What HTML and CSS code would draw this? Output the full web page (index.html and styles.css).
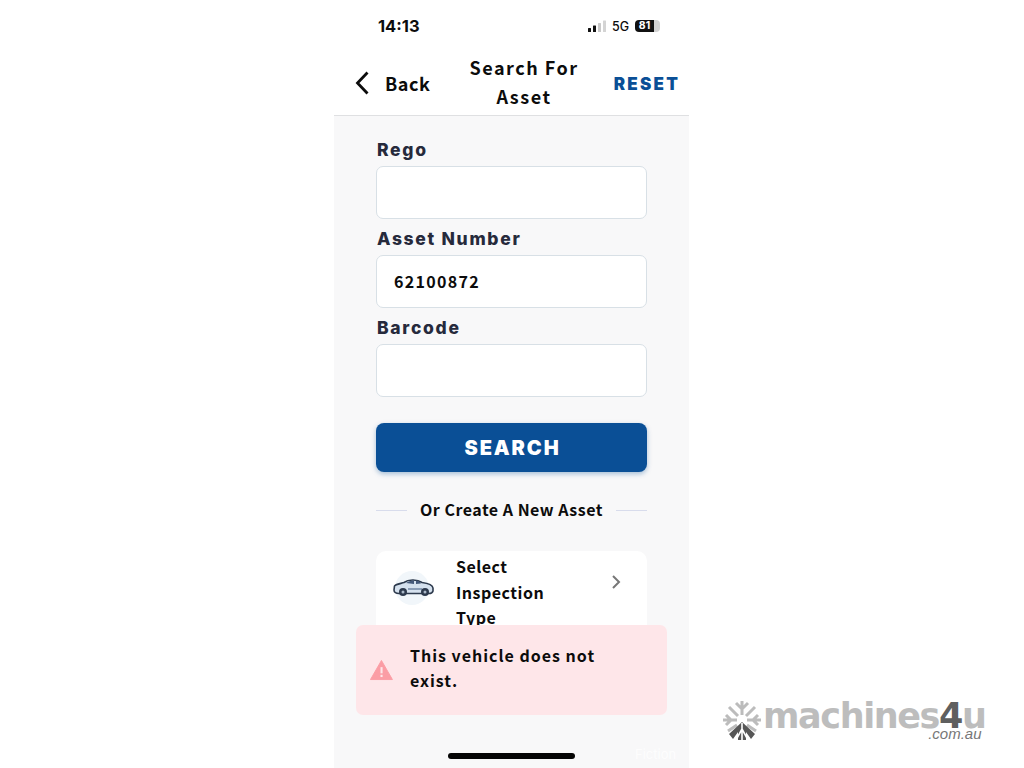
FILE: index.html
```html
<!DOCTYPE html>
<html>
<head>
<meta charset="utf-8">
<title>Search For Asset</title>
<link rel="stylesheet" href="styles.css">
</head>

<body>
	<div class="phone">
		<div class="status-bar">
			<span class="time">14:13</span>
			<div class="status-icons">
				<svg class="signal" width="18" height="12" viewBox="0 0 18 12">
					<rect x="0" y="8" width="3" height="4" rx="0.5" fill="#111"/>
					<rect x="5" y="5.5" width="3" height="6.5" rx="0.5" fill="#111"/>
					<rect x="10" y="3" width="3" height="9" rx="0.5" fill="#c9c9c9"/>
					<rect x="15" y="0.5" width="3" height="11.5" rx="0.5" fill="#d4d4d4"/>
				</svg>
				<span class="network">5G</span>
				<div class="battery"><span class="battery-level">81</span><span class="battery-rest"></span></div>
			</div>
		</div>

		<div class="nav-bar">
			<div class="nav-back">
				<svg width="14" height="24" viewBox="0 0 14 24">
					<path d="M12.500 1.500 L2.500 12 L12.500 22.500" fill="none" stroke="#0c0c0c" stroke-width="2.800"/>
				</svg>
				<span>Back</span>
			</div>
			<div class="nav-title">Search For<br>Asset</div>
			<div class="nav-reset">RESET</div>
		</div>

		<div class="content">
			<label class="field-label">Rego</label>
			<div class="field"></div>
			<label class="field-label">Asset Number</label>
			<div class="field">62100872</div>
			<label class="field-label">Barcode</label>
			<div class="field"></div>

			<button class="search-btn">SEARCH</button>

			<div class="divider">
				<span class="divider-line"></span>
				<span class="divider-text">Or Create A New Asset</span>
				<span class="divider-line"></span>
			</div>

			<div class="card">
				<div class="car-icon">
					<svg width="42" height="40" viewBox="0 0 42 40">
						<circle cx="19" cy="20" r="17" fill="#f1f6fa"/>
						<path d="M1.500 18 C2 16.500 8 15.500 11 14.500 C15 11.500 24 11 29 14.500 C33 15 39.500 16.500 40 20 L40 23 C39.500 25 38 25.500 36 25.500 L6 25.500 C3 25.500 1 24.500 1 22 Z" fill="#d5e1ee" stroke="#2d3a4d" stroke-width="1.600"/>
						<path d="M13 15 C16 13 19 12.500 21 12.500 L21 16 Z M23 12.500 C25 12.500 27 13.500 28 15.500 L23 16 Z" fill="#44597a"/>
						<path d="M15 21 H29" stroke="#6c81a0" stroke-width="1.400"/>
						<circle cx="10" cy="24" r="4" fill="#2d3a4d"/>
						<circle cx="32" cy="24" r="4" fill="#2d3a4d"/>
						<circle cx="10" cy="24" r="1.500" fill="#aab8c8"/>
						<circle cx="32" cy="24" r="1.500" fill="#aab8c8"/>
					</svg>
				</div>
				<div class="card-text">Select Inspection Type</div>
				<svg class="card-arrow" width="10" height="16" viewBox="0 0 10 16">
					<path d="M2 2 L8 8 L2 14" fill="none" stroke="#777" stroke-width="2"/>
				</svg>
			</div>
		</div>

		<div class="toast">
			<svg class="toast-icon" width="24" height="22" viewBox="0 0 24 22">
				<path d="M12 1 L23.500 21 L0.500 21 Z" fill="#fb9da5" stroke="#fb9da5" stroke-linejoin="round"/>
				<rect x="11" y="8" width="2.200" height="6.500" fill="#fee6e9"/>
				<rect x="11" y="16" width="2.200" height="2.400" fill="#fee6e9"/>
			</svg>
			<div class="toast-text">This vehicle does not exist.</div>
		</div>

		<div class="home-bar"></div>
		<div class="faint-mark">Fiction</div>
	</div>

	<div class="logo">
		<svg width="38" height="40" viewBox="-19 -20 38 40">
			<g stroke="#bcbcbc" stroke-width="3" fill="none">
				<path d="M0 -5 V-19 M-6 -17 L0 -11 L6 -17"/>
				<path d="M-5 0 H-19 M5 0 H19 M-16 -5 L-11 0 L-16 5 M16 -5 L11 0 L16 5"/>
				<path d="M-4 -4 L-13 -13 M4 -4 L13 -13"/>
				<path d="M-5 5 L-14 11 M5 5 L14 11"/>
			</g>
			<path d="M0 2 L-13 14 L-9 19 L-4 12 L-4 20 L4 20 L4 12 L9 19 L13 14 Z" fill="#565656"/>
			<path d="M0 3 V20 M-6 20 L0 9 L6 20" stroke="#fff" stroke-width="1.600" fill="none"/>
		</svg>
		<div class="logo-words">
			<div class="logo-name">machines<span class="logo-four">4</span>u</div>
			<div class="logo-domain">.com.au</div>
		</div>
	</div>
</body>
</html>
```

FILE: styles.css
```css
body {
	margin: 0;
	height: 768px;
	padding-left: 334px;
	background: #fff;
	overflow: hidden;
	font-family: "Noto Sans CJK JP", "Noto Sans", sans-serif;
	color: #0c0c0c;
}

.phone {
	position: relative;
	width: 355px;
	height: 768px;
	display: flex;
	flex-direction: column;
	overflow: hidden;
}

.status-bar {
	height: 52px;
	box-sizing: border-box;
	padding: 0 29px 0 44px;
	display: flex;
	justify-content: space-between;
	align-items: center;
}

.time {
	font-family: Inter, sans-serif;
	font-size: 16.500px;
	font-weight: 700;
}

.status-icons {
	display: flex;
	align-items: center;
	gap: 6px;
}

.network {
	font-family: Inter, sans-serif;
	font-size: 12.500px;
	font-weight: 500;
}

.battery {
	display: flex;
	align-items: center;
	height: 12px;
}

.battery-level {
	width: 19px;
	height: 12px;
	background: #111;
	border-radius: 4px 0 0 4px;
	color: #fff;
	font-family: Inter, sans-serif;
	font-size: 10.500px;
	font-weight: 700;
	line-height: 12px;
	text-align: center;
}

.battery-rest {
	width: 6px;
	height: 12px;
	background: #d2d2d2;
	border-radius: 0 4px 4px 0;
}

.nav-bar {
	height: 64px;
	box-sizing: border-box;
	border-bottom: 1px solid #dfe0e2;
	padding: 0 9px 0 21px;
	display: flex;
	align-items: center;
}

.nav-back {
	display: flex;
	align-items: center;
	gap: 16px;
	width: 104px;
	padding-bottom: 2px;
	font-size: 18px;
	font-weight: 700;
	letter-spacing: 0.500px;
}

.nav-title {
	width: 130px;
	padding-bottom: 4px;
	font-size: 18px;
	font-weight: 700;
	line-height: 29px;
	letter-spacing: 1.500px;
	text-align: center;
}

.nav-reset {
	margin-left: auto;
	font-family: Inter, sans-serif;
	font-size: 17px;
	font-weight: 900;
	letter-spacing: 2.200px;
	color: #0a4f96;
}

.content {
	flex: 1;
	background: #f8f8f9;
	padding: 22px 42px 0;
}

.field-label {
	display: block;
	height: 28px;
	padding-left: 1px;
	line-height: 24px;
	font-family: Inter, sans-serif;
	font-size: 17.500px;
	font-weight: 800;
	letter-spacing: 1.700px;
	color: #262a3c;
}

.field {
	height: 53px;
	box-sizing: border-box;
	margin-bottom: 8px;
	padding-left: 17px;
	background: #fff;
	border: 1px solid #d8e0e6;
	border-radius: 7px;
	font-size: 16px;
	font-weight: 700;
	letter-spacing: 1.300px;
	line-height: 51px;
}

.search-btn {
	display: block;
	width: 100%;
	height: 49px;
	margin-top: 26px;
	padding-left: 8px;
	background: #0a4f96;
	border: none;
	border-radius: 8px;
	box-shadow: 0 2px 5px rgba(10, 79, 150, 0.35);
	color: #fff;
	font-family: Inter, sans-serif;
	font-size: 20px;
	font-weight: 900;
	letter-spacing: 1.900px;
}

.divider {
	display: flex;
	align-items: center;
	justify-content: space-between;
	margin-top: 24px;
	height: 28px;
}

.divider-line {
	width: 31px;
	height: 1px;
	background: #d8dcec;
}

.divider-text {
	margin-top: -2px;
	font-size: 16px;
	font-weight: 700;
	letter-spacing: 0.500px;
}

.card {
	display: flex;
	align-items: flex-start;
	height: 110px;
	box-sizing: border-box;
	margin-top: 27px;
	padding: 3px 25px 0 17px;
	background: #fff;
	border-radius: 10px;
}

.car-icon {
	width: 63px;
	margin-top: 14px;
}

.card-text {
	width: 110px;
	font-size: 16px;
	font-weight: 700;
	line-height: 25.500px;
	letter-spacing: 0.500px;
}

.card-arrow {
	margin: 20px 1px 0 auto;
}

.toast {
	position: absolute;
	left: 22px;
	top: 625px;
	width: 311px;
	height: 90px;
	box-sizing: border-box;
	padding: 0 30px 4px 14px;
	display: flex;
	align-items: center;
	gap: 17px;
	background: #fee6e9;
	border-radius: 7px;
}

.toast-icon {
	margin-top: 4px;
}

.toast-text {
	font-size: 16px;
	font-weight: 700;
	line-height: 25.500px;
	letter-spacing: 1px;
}

.home-bar {
	position: absolute;
	left: 114px;
	top: 753px;
	width: 127px;
	height: 6px;
	background: #050505;
	border-radius: 3px;
}

.faint-mark {
	position: absolute;
	left: 301px;
	top: 746px;
	font-family: Inter, sans-serif;
	font-size: 13px;
	color: #fff;
	opacity: 0.8;
}

.logo {
	position: absolute;
	left: 723px;
	top: 700px;
	display: flex;
	gap: 2px;
}

.logo-name {
	font-family: "DejaVu Sans", sans-serif;
	font-size: 35px;
	font-weight: 700;
	line-height: 32px;
	letter-spacing: -1.400px;
	color: #bdbdbd;
}

.logo-four {
	color: #5f5f5f;
}

.logo-domain {
	margin-top: -3px;
	padding-right: 4px;
	font-family: "Liberation Sans", sans-serif;
	font-size: 15px;
	font-style: italic;
	line-height: 10px;
	color: #777;
	text-align: right;
}
```
